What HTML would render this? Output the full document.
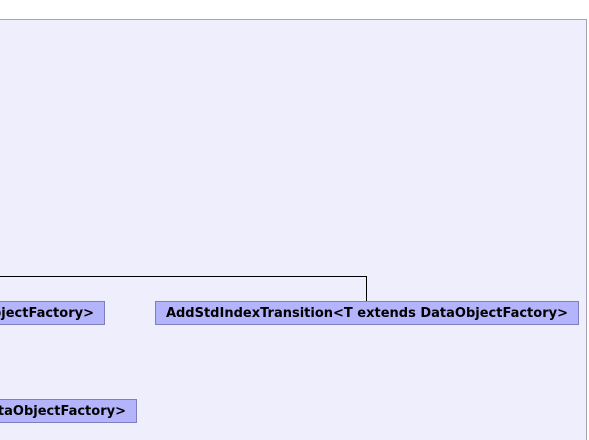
<!DOCTYPE html>
<html><head><style>
html,body{margin:0;padding:0;width:589px;height:440px;background:#fff;overflow:hidden;position:relative}
.panel{position:absolute;left:-2px;top:19px;width:589px;height:440px;background:#eeeefc;border:1px solid #a4a4b4;box-sizing:border-box}
.b{position:absolute;height:24px;background:#b4b4fc;border:1px solid #7e7ec0;box-sizing:border-box;overflow:hidden}
.b span{position:absolute;right:10px;top:1px;font:bold 13px "DejaVu Sans",sans-serif;line-height:22px;color:#000;white-space:nowrap}
.l{position:absolute;background:#000}
</style></head><body>
<div class="panel"></div>
<div class="l" style="left:0;top:276px;width:367px;height:1px"></div>
<div class="l" style="left:366px;top:276px;width:1px;height:25px"></div>
<div class="b" style="left:-100px;top:301px;width:205px"><span>AddStdIndexTransition&lt;T extends DataObjectFactory&gt;</span></div>
<div class="b" style="left:155px;top:301px;width:424px"><span>AddStdIndexTransition&lt;T extends DataObjectFactory&gt;</span></div>
<div class="b" style="left:-100px;top:399px;width:237px"><span>AddStdIndexTransition&lt;T extends DataObjectFactory&gt;</span></div>
</body></html>
